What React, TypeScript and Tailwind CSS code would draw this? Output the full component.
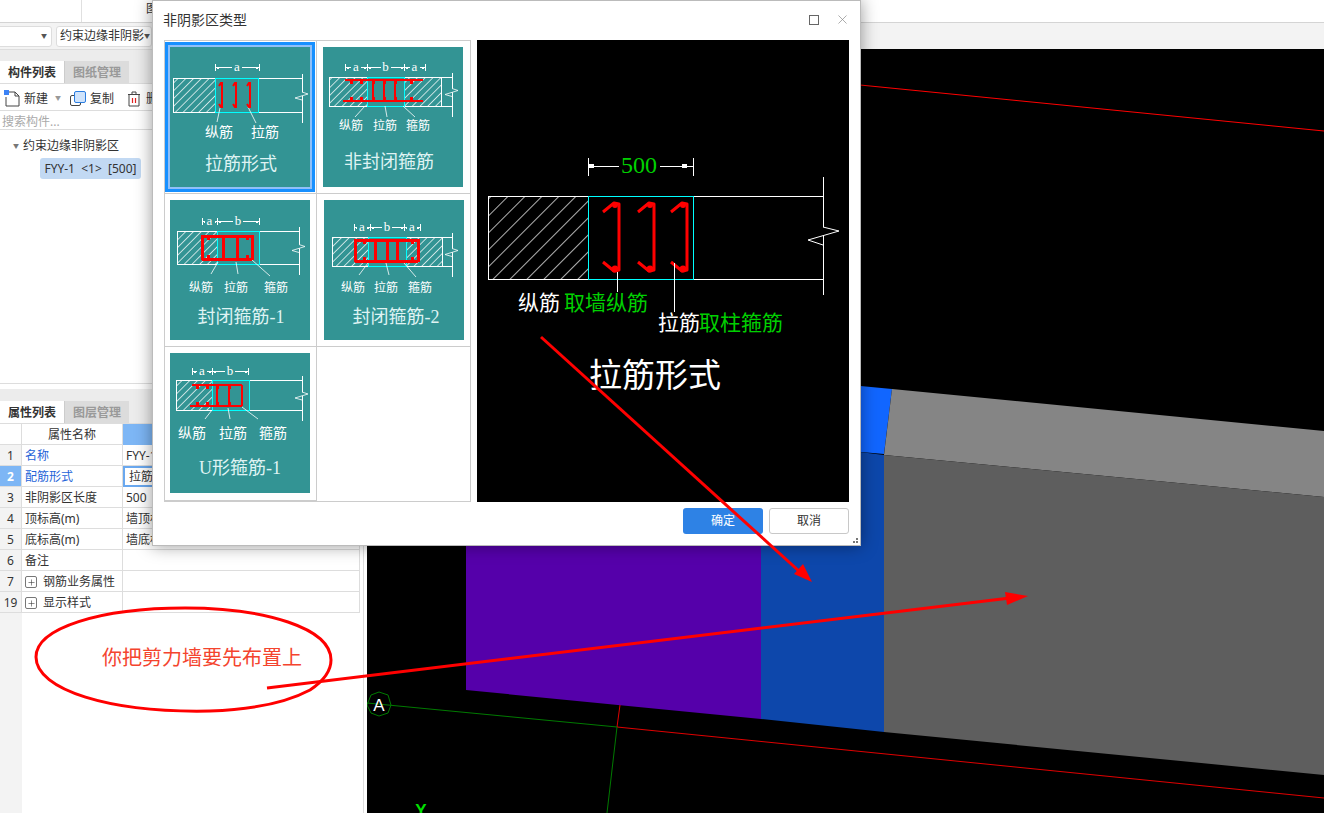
import { Plus, X } from 'lucide-react'

const teal = '#339494'
const rowData = [
  { no: '1', name: '名称', value: 'FYY-1', link: true },
  { no: '2', name: '配筋形式', value: '拉筋形式', link: true, active: true },
  { no: '3', name: '非阴影区长度', value: '500' },
  { no: '4', name: '顶标高(m)', value: '墙顶标高' },
  { no: '5', name: '底标高(m)', value: '墙底标高' },
  { no: '6', name: '备注', value: '' },
  { no: '7', name: '钢筋业务属性', value: '', group: true },
  { no: '19', name: '显示样式', value: '', group: true },
]

function HatchDef({ id, gap = 5.5 }: { id: string; gap?: number }) {
  return (
    <pattern id={id} width={gap} height={gap} patternUnits="userSpaceOnUse" patternTransform="rotate(45)">
      <line x1="0" y1="0" x2="0" y2={gap} stroke="#fff" strokeWidth="1.4" />
    </pattern>
  )
}

interface DiagramProps {
  id: string
  box: [number, number, number, number]
  hatch: [number, number][]
  cyan: [number, number]
  end: number
  dimY: number
  dims: [number, number, string][]
  labels: [number, string][]
  labelY: number
  labelSize?: number
  title: string
  titleX: number
  titleY: number
  leaders: [number, number, number, number][]
  children: React.ReactNode
}

// 卡片里的小示意图
function Diagram(p: DiagramProps) {
  const [x0, x1, y0, y1] = p.box
  const mid = (y0 + y1) / 2
  return (
    <svg viewBox="0 0 140 140" className="w-[140px] h-[140px] block font-['Liberation_Serif','Noto_Sans_CJK_SC',serif]">
      <defs>
        <HatchDef id={p.id} />
      </defs>
      <rect width="140" height="140" fill={teal} />
      <g shapeRendering="crispEdges">
        {p.hatch.map(([a, b]) => (
          <rect key={a} x={a} y={y0} width={b - a} height={y1 - y0} fill={`url(#${p.id})`} />
        ))}
        <rect x={x0 + 0.5} y={y0 + 0.5} width={x1 - x0} height={y1 - y0} fill="none" stroke="#fff" strokeWidth="1" />
        <line x1={p.end + 0.5} y1={y0 - 4} x2={p.end + 0.5} y2={y1 + 11} stroke="#fff" />
        <line x1={x1} y1={y0 + 0.5} x2={p.end} y2={y0 + 0.5} stroke="#fff" />
        <line x1={x1} y1={y1 + 0.5} x2={p.end} y2={y1 + 0.5} stroke="#fff" />
        <rect x={p.cyan[0] + 0.5} y={y0 + 0.5} width={p.cyan[1] - p.cyan[0]} height={y1 - y0} fill="none" stroke="#00ffff" />
      </g>
      <polyline points={`${p.end},${mid - 3} ${p.end + 6},${mid - 1} ${p.end - 7},${mid + 3} ${p.end},${mid + 5}`} fill={teal} stroke="#fff" strokeWidth="0.8" />
      {p.dims.map(([a, b, t]) => (
        <g key={a} shapeRendering="crispEdges">
          <line x1={a} y1={p.dimY + 0.5} x2={b} y2={p.dimY + 0.5} stroke="#fff" />
          <line x1={a + 0.5} y1={p.dimY - 3} x2={a + 0.5} y2={p.dimY + 4} stroke="#fff" />
          <line x1={b + 0.5} y1={p.dimY - 3} x2={b + 0.5} y2={p.dimY + 4} stroke="#fff" />
          <rect x={a + 2} y={p.dimY - 0.5} width="2" height="2" fill="#fff" />
          <rect x={b - 3} y={p.dimY - 0.5} width="2" height="2" fill="#fff" />
          <rect x={(a + b) / 2 - 5} y={p.dimY - 6} width="10" height="12" fill={teal} />
          <text x={(a + b) / 2} y={p.dimY + 4} textAnchor="middle" fontSize="13" fill="#fff">{t}</text>
        </g>
      ))}
      {p.leaders.map(([a, b, c, d]) => (
        <line key={a} x1={a} y1={b} x2={c} y2={d} stroke="#fff" strokeWidth="0.8" />
      ))}
      {p.children}
      {p.labels.map(([x, t]) => (
        <text key={x} x={x} y={p.labelY} textAnchor="middle" fontSize={p.labelSize ?? 13} fill="#fff">{t}</text>
      ))}
      <text x={p.titleX} y={p.titleY} textAnchor="middle" fontSize="18" fill="#dff3f3">{p.title}</text>
    </svg>
  )
}

function Hook({ x, top, bottom }: { x: number; top: number; bottom: number }) {
  return (
    <g>
      <polyline
        points={`${x - 3},${top + 4} ${x - 1},${top + 1} ${x},${top + 1} ${x},${bottom - 1} ${x - 1},${bottom - 1} ${x - 3},${bottom - 4}`}
        fill="none"
        stroke="#ff0000"
        strokeWidth="2"
      />
      <circle cx={x - 1} cy={top + 2} r="1.3" fill="#ff0000" />
      <circle cx={x - 1} cy={bottom - 2} r="1.3" fill="#ff0000" />
    </g>
  )
}

function RedLines({ lines, knots = [], w = 2 }: { lines: [number, number, number, number][]; knots?: [number, number][]; w?: number }) {
  return (
    <g shapeRendering="crispEdges">
      {lines.map(([a, b, c, d], i) => (
        <line key={i} x1={a} y1={b} x2={c} y2={d} stroke="#ff0000" strokeWidth={w} />
      ))}
      {knots.map(([x, y], i) => (
        <rect key={i} x={x - 1.5} y={y - 1} width="3" height="3" fill="#ff0000" />
      ))}
    </g>
  )
}

function Preview() {
  const hooks = [142, 177, 210]
  return (
    <svg viewBox="0 0 372 462" className="w-[372px] h-[462px] block bg-black font-['Liberation_Serif','Noto_Sans_CJK_SC',serif]">
      <defs>
        <HatchDef id="hatchBig" gap={12} />
      </defs>
      <g shapeRendering="crispEdges">
        <rect x="11" y="156" width="100" height="83" fill="url(#hatchBig)" />
        <rect x="11.5" y="156.5" width="335" height="83" fill="none" stroke="#fff" />
        <rect x="111.5" y="156.5" width="105" height="83" fill="none" stroke="#00ffff" />
        <line x1="346.5" y1="137" x2="346.5" y2="255" stroke="#fff" />
        <line x1="111.5" y1="118" x2="111.5" y2="136" stroke="#fff" />
        <line x1="216.5" y1="118" x2="216.5" y2="136" stroke="#fff" />
        <line x1="111" y1="126.5" x2="142" y2="126.5" stroke="#fff" />
        <line x1="183" y1="126.5" x2="216" y2="126.5" stroke="#fff" />
        <rect x="112" y="124" width="5" height="4" fill="#fff" />
        <rect x="205" y="124" width="5" height="4" fill="#fff" />
      </g>
      <polyline points="346,187 362,191 331,200 346,205" fill="#000" stroke="#fff" />
      <text x="162" y="133" textAnchor="middle" fontSize="24" fill="#00d000">500</text>
      {hooks.map((x) => (
        <g key={x}>
          <polyline
            points={`${x - 16},172 ${x - 5},163 ${x},164 ${x},230 ${x - 5},231 ${x - 16},222`}
            fill="none"
            stroke="#ff0000"
            strokeWidth="3"
            strokeLinejoin="round"
          />
          <circle cx={x - 4} cy={165} r="3" fill="#ff0000" />
          <circle cx={x - 4} cy={229} r="3.5" fill="#ff0000" />
        </g>
      ))}
      <line x1="140.5" y1="232" x2="140.5" y2="252" stroke="#fff" />
      <line x1="197.5" y1="223" x2="197.5" y2="272" stroke="#fff" />
      <text x="41" y="270" fontSize="21" fill="#fff">纵筋</text>
      <text x="87" y="270" fontSize="21" fill="#00d000">取墙纵筋</text>
      <text x="181" y="290" fontSize="21" fill="#fff">拉筋</text>
      <text x="222" y="290" fontSize="21" fill="#00d000">取柱箍筋</text>
      <text x="112" y="347" fontSize="33" fill="#fff">拉筋形式</text>
    </svg>
  )
}

function Scene() {
  return (
    <svg viewBox="367 49 957 764" className="w-[957px] h-[764px] block bg-black">
      <polygon points="466,400 761,430 761,719 466,690" fill="#5500aa" />
      <polygon points="761,440 884,455 884,732 761,719" fill="#0d47ab" />
      <polygon points="850,385 892,389 884,454 850,451" fill="#1166ff" />
      <polygon points="892,389 1324,431 1324,497 884,455" fill="#858585" />
      <polygon points="884,455 1324,497 1324,775 884,732" fill="#5e5e5e" />
      <line x1="860" y1="85" x2="1324" y2="131" stroke="#ff0000" strokeWidth="1" />
      <line x1="617" y1="727" x2="1324" y2="798" stroke="#e00000" strokeWidth="1" />
      <line x1="620" y1="705" x2="617" y2="727" stroke="#e00000" strokeWidth="1" />
      <line x1="367" y1="703" x2="617" y2="727" stroke="#007a00" strokeWidth="1" />
      <line x1="617" y1="727" x2="607" y2="813" stroke="#007a00" strokeWidth="1" />
      <polygon points="379,692 388,695 391,705 388,713 379,716 371,713 367,705 371,695" fill="none" stroke="#007a00" />
      <text x="379" y="711" textAnchor="middle" fontSize="17" fill="#fff" fontFamily="Liberation Sans">A</text>
      <text x="421" y="816" textAnchor="middle" fontSize="17" fontWeight="700" fill="#00e000" fontFamily="Liberation Sans">Y</text>
    </svg>
  )
}

function NewIcon() {
  return (
    <svg width="16" height="18" viewBox="0 0 16 18" fill="none">
      <path d="M5 2h6l4 4v10H2V7" stroke="#444" strokeWidth="1" />
      <path d="M11 2v4h4" stroke="#444" strokeWidth="1" />
      <rect x="0" y="0" width="5" height="5" fill="#3b82f6" />
    </svg>
  )
}

function CopyIcon() {
  return (
    <svg width="16" height="16" viewBox="0 0 16 16" fill="none">
      <rect x="0.5" y="4.5" width="10" height="10" rx="1.5" stroke="#444" />
      <rect x="4.5" y="0.5" width="11" height="11" rx="1.5" fill="#cfe3fb" stroke="#2b7de0" />
    </svg>
  )
}

function TrashIcon() {
  return (
    <svg width="14" height="16" viewBox="0 0 14 16" fill="none">
      <path d="M1 3.5h12M5 3V1h4v2M2 4v11h10V4" stroke="#444" />
      <path d="M5.5 7v5M8.5 7v5" stroke="#e02020" strokeWidth="1.2" />
    </svg>
  )
}

function Tabs({ first, second }: { first: string; second: string }) {
  return (
    <div className="h-[23px] flex bg-[#ececec] border-b border-[#ddd]">
      <div className="w-[64px] pt-[2px] bg-white flex items-center justify-center text-[12px] font-bold text-[#333]">{first}</div>
      <div className="w-[65px] pt-[2px] bg-[#dcdcdc] border-l border-[#ccc] flex items-center justify-center text-[12px] font-bold text-[#999]">{second}</div>
    </div>
  )
}

function LeftPanel() {
  return (
    <div className="w-[367px] h-[764px] shrink-0 bg-white pr-[3px]">
      <div className="h-full flex flex-col border-r border-[#ddd]">
        <div className="h-[12px] bg-[#ececec] border-t border-[#ddd]" />
        <Tabs first="构件列表" second="图纸管理" />
        <div className="h-[27px] pt-[3px] flex items-center text-[12px] text-[#333] border-b border-[#ddd]">
          <div className="ml-[4px] flex items-center gap-[4px]"><NewIcon /><span>新建</span></div>
          <span className="ml-[7px] text-[6px] text-[#999]">▼</span>
          <div className="ml-[9px] flex items-center gap-[4px]"><CopyIcon /><span>复制</span></div>
          <div className="ml-[13px] flex items-center gap-[5px]"><TrashIcon /><span>删除</span></div>
        </div>
        <div className="h-[19px] pt-[3px] flex items-center pl-[2px] text-[12px] text-[#aaa] border-b border-[#ddd]">搜索构件...</div>
        <div className="h-[254px] border-b border-[#ddd] text-[12px] text-[#333]">
          <div className="mt-[7px] ml-[13px] flex items-center gap-[4px]">
            <span className="text-[6px] text-[#777]">▼</span>
            <span>约束边缘非阴影区</span>
          </div>
          <div className="mt-[3px] ml-[40px] w-[101px] h-[21px] rounded-[3px] bg-[#c2d9f3] flex items-center justify-center whitespace-pre">{'FYY-1  <1>  [500]'}</div>
        </div>
        <div className="h-[17px] bg-[#ececec] border-t-[5px] border-white" />
        <Tabs first="属性列表" second="图层管理" />
        <div className="flex-1 flex flex-col">
          <div className="w-[360px] grid grid-cols-[22px_101px_237px] text-[12px] text-[#333]">
            <div className="h-[21px] border-b border-r border-[#ddd]" />
            <div className="h-[21px] pt-[2px] border-b border-r border-[#ddd] flex items-center justify-center">属性名称</div>
            <div className="h-[21px] bg-[#7db6f5]" />
            {rowData.map((r) => (
              <div key={r.no} className="contents">
                <div className={`h-[21px] pt-[2px] border-b border-r border-[#ddd] flex items-center justify-center ${r.active ? 'bg-[#7db6f5] text-white font-bold' : 'bg-[#f3f3f3]'}`}>{r.no}</div>
                <div className={`h-[21px] pt-[2px] border-b border-r border-[#ddd] flex items-center pl-[3px] whitespace-nowrap ${r.link ? 'text-[#2563d8]' : ''}`}>
                  {r.group && (
                    <span className="mr-[6px] w-[12px] h-[12px] rounded-[2px] border border-[#777] flex items-center justify-center shrink-0">
                      <Plus size={9} strokeWidth={1.5} />
                    </span>
                  )}
                  {r.name}
                </div>
                <div className={`h-[21px] flex items-center ${r.active ? 'border-2 border-[#6aa8ef] pl-[4px]' : 'pt-[2px] border-b border-r border-[#ddd] pl-[3px]'}`}>{r.value}</div>
              </div>
            ))}
          </div>
          <div className="flex-1 w-[22px] bg-[#f3f3f3]" />
        </div>
      </div>
    </div>
  )
}

function Dialog() {
  return (
    <div className="absolute left-[152px] top-0 w-[709px] h-[546px] bg-white border border-[#bbb] shadow-[0_0_16px_rgba(0,0,0,0.4)] flex flex-col">
      <div className="h-[39px] pb-[2px] shrink-0 flex items-center pl-[10px] text-[14px] text-[#333]">
        <span className="flex-1">非阴影区类型</span>
        <span className="w-[10px] h-[10px] border border-[#666] mr-[16px]" />
        <X size={15} strokeWidth={1.1} color="#888" className="mr-[10px]" />
      </div>
      <div className="flex gap-[6px] pl-[11px]">
        <div className="w-[307px] h-[462px] border border-[#ccc] grid grid-cols-[152px_153px] grid-rows-[153px_153px_154px]">
          <div className="border-b border-r border-[#ccc] pt-[6px] pl-[5px]">
            <div className="w-[140px] h-[140px] shadow-[0_0_0_2px_#90c0f8,0_0_0_5px_#1890ff]">
              <Diagram
                id="h1"
                box={[3, 132, 31, 65]}
                hatch={[[3, 45]]}
                cyan={[45, 88]}
                end={132}
                dimY={20}
                dims={[[45, 89, 'a']]}
                labels={[[49, '纵筋'], [95, '拉筋']]}
                labelY={90}
                labelSize={14}
                title="拉筋形式"
                titleX={71}
                titleY={123}
                leaders={[[50, 61, 47, 75], [78, 60, 86, 76]]}
              >
                <Hook x={52} top={35} bottom={61} />
                <Hook x={66} top={35} bottom={61} />
                <Hook x={80} top={35} bottom={61} />
              </Diagram>
            </div>
          </div>
          <div className="border-b border-[#ccc] pt-[6px] pl-[6px]">
            <Diagram
              id="h2"
              box={[6, 118, 30, 59]}
              hatch={[[6, 44], [81, 118]]}
              cyan={[44, 81]}
              end={129}
              dimY={20}
              dims={[[22, 44, 'a'], [44, 81, 'b'], [81, 102, 'a']]}
              labels={[[28, '纵筋'], [62, '拉筋'], [95, '箍筋']]}
              labelY={83}
              labelSize={12}
              title="非封闭箍筋"
              titleX={66}
              titleY={121}
              leaders={[[42, 59, 32, 70], [62, 59, 64, 70], [80, 59, 92, 70]]}
            >
              <RedLines
                w={2}
                lines={[[22, 33, 100, 33], [20, 54, 100, 54], [50, 33, 50, 54], [61, 33, 61, 54], [72, 33, 72, 54]]}
                knots={[[28, 35], [38, 35], [50, 35], [61, 35], [72, 35], [88, 35], [28, 51], [38, 51], [50, 51], [61, 51], [72, 51], [88, 51]]}
              />
            </Diagram>
          </div>
          <div className="border-b border-r border-[#ccc] pt-[6px] pl-[5px]">
            <Diagram
              id="h3"
              box={[7, 129, 31, 64]}
              hatch={[[7, 47]]}
              cyan={[47, 89]}
              end={129}
              dimY={21}
              dims={[[32, 47, 'a'], [47, 89, 'b']]}
              labels={[[31, '纵筋'], [66, '拉筋'], [106, '箍筋']]}
              labelY={92}
              labelSize={12}
              title="封闭箍筋-1"
              titleX={71}
              titleY={123}
              leaders={[[48, 62, 41, 74], [66, 62, 68, 74], [82, 60, 100, 76]]}
            >
              <RedLines
                w={3}
                lines={[[32, 36, 82, 36], [32, 59, 82, 59], [32, 35, 32, 60], [82, 35, 82, 60], [53, 36, 53, 59], [67, 36, 67, 59]]}
                knots={[[38, 38], [53, 38], [67, 38], [77, 38], [38, 56], [53, 56], [67, 56], [77, 56]]}
              />
            </Diagram>
          </div>
          <div className="border-b border-[#ccc] pt-[6px] pl-[7px]">
            <Diagram
              id="h4"
              box={[8, 118, 37, 66]}
              hatch={[[8, 44], [82, 118]]}
              cyan={[44, 82]}
              end={128}
              dimY={27}
              dims={[[30, 46, 'a'], [46, 80, 'b'], [80, 96, 'a']]}
              labels={[[29, '纵筋'], [62, '拉筋'], [96, '箍筋']]}
              labelY={92}
              labelSize={12}
              title="封闭箍筋-2"
              titleX={72}
              titleY={123}
              leaders={[[44, 63, 35, 75], [62, 63, 65, 75], [80, 63, 92, 77]]}
            >
              <RedLines
                w={3}
                lines={[[31, 40, 94, 40], [31, 61, 94, 61], [31, 39, 31, 62], [94, 39, 94, 62], [51, 40, 51, 61], [63, 40, 63, 61], [73, 40, 73, 61]]}
                knots={[[40, 42], [51, 42], [63, 42], [73, 42], [88, 42], [40, 58], [51, 58], [63, 58], [73, 58], [88, 58]]}
              />
            </Diagram>
          </div>
          <div className="border-b border-r border-[#ccc] pt-[6px] pl-[5px]">
            <Diagram
              id="h5"
              box={[6, 132, 27, 57]}
              hatch={[[6, 42]]}
              cyan={[42, 79]}
              end={132}
              dimY={18}
              dims={[[22, 42, 'a'], [42, 78, 'b']]}
              labels={[[22, '纵筋'], [63, '拉筋'], [103, '箍筋']]}
              labelY={85}
              labelSize={14}
              title="U形箍筋-1"
              titleX={70}
              titleY={121}
              leaders={[[42, 57, 35, 66], [58, 55, 60, 66], [72, 54, 88, 66]]}
            >
              <RedLines
                w={2.5}
                lines={[[22, 32, 72, 32], [20, 53, 72, 53], [72, 32, 72, 53], [47, 32, 47, 53], [59, 32, 59, 53]]}
                knots={[[27, 34], [37, 34], [47, 34], [59, 34], [27, 50], [37, 50], [47, 50], [59, 50]]}
              />
            </Diagram>
          </div>
          <div />
        </div>
        <Preview />
      </div>
      <div className="flex justify-end gap-[6px] pr-[11px] pt-[6px]">
        <button className="w-[80px] h-[26px] rounded-[3px] bg-[#2e82e5] text-white text-[12px]">确定</button>
        <button className="w-[80px] h-[26px] rounded-[3px] border border-[#c8c8c8] bg-white text-[#333] text-[12px]">取消</button>
      </div>
      <div className="absolute right-[2px] bottom-[2px] grid grid-cols-3 gap-px w-[8px]">
        <span />
        <span />
        <span className="w-[2px] h-[2px] bg-[#777]" />
        <span />
        <span className="w-[2px] h-[2px] bg-[#777]" />
        <span className="w-[2px] h-[2px] bg-[#777]" />
      </div>
    </div>
  )
}

function Annotations() {
  return (
    <svg viewBox="0 0 1324 813" className="absolute inset-0 w-[1324px] h-[813px] pointer-events-none">
      <path
        d="M210 711 C110 713 36 690 36 657 C36 628 100 608 185 608 C265 608 331 628 331 660 C331 672 322 682 310 690 C280 706 240 710 210 711 Z"
        fill="none"
        stroke="#ff0000"
        strokeWidth="3"
      />
      <text x="102" y="665" fontSize="20" fill="#f4442e" fontFamily="Liberation Serif, Noto Sans CJK SC, serif">你把剪力墙要先布置上</text>
      <line x1="541" y1="337" x2="800" y2="572" stroke="#ff0000" strokeWidth="3" />
      <polygon points="812,582 794,574 803,564" fill="#ff0000" />
      <line x1="267" y1="688" x2="1010" y2="598" stroke="#ff0000" strokeWidth="3" />
      <polygon points="1028,596 1005,592 1007,605" fill="#ff0000" />
    </svg>
  )
}

export default function App() {
  return (
    <div className="relative w-[1324px] h-[813px] overflow-hidden bg-white font-['Noto_Sans','Noto_Sans_CJK_SC',sans-serif]">
      <div className="h-[23px] bg-white border-b border-[#d4d4d4] flex">
        <div className="w-[82px] border-r border-[#e0e0e0]" />
        <span className="ml-[64px] text-[12px] text-[#333]">图</span>
      </div>
      <div className="h-[26px] bg-[#f3f3f3] flex items-center gap-[4px]">
        <div className="-ml-[4px] w-[56px] h-[21px] bg-white border border-[#ddd] rounded-[3px] flex items-center justify-end pr-[4px] text-[6px] text-[#555]">▼</div>
        <div className="w-[96px] h-[21px] bg-white border border-[#ddd] rounded-[3px] flex items-center justify-between px-[3px] text-[12px] text-[#333] whitespace-nowrap">
          约束边缘非阴影
          <span className="text-[6px] text-[#555]">▼</span>
        </div>
      </div>
      <div className="flex">
        <LeftPanel />
        <Scene />
      </div>
      <Dialog />
      <Annotations />
    </div>
  )
}
